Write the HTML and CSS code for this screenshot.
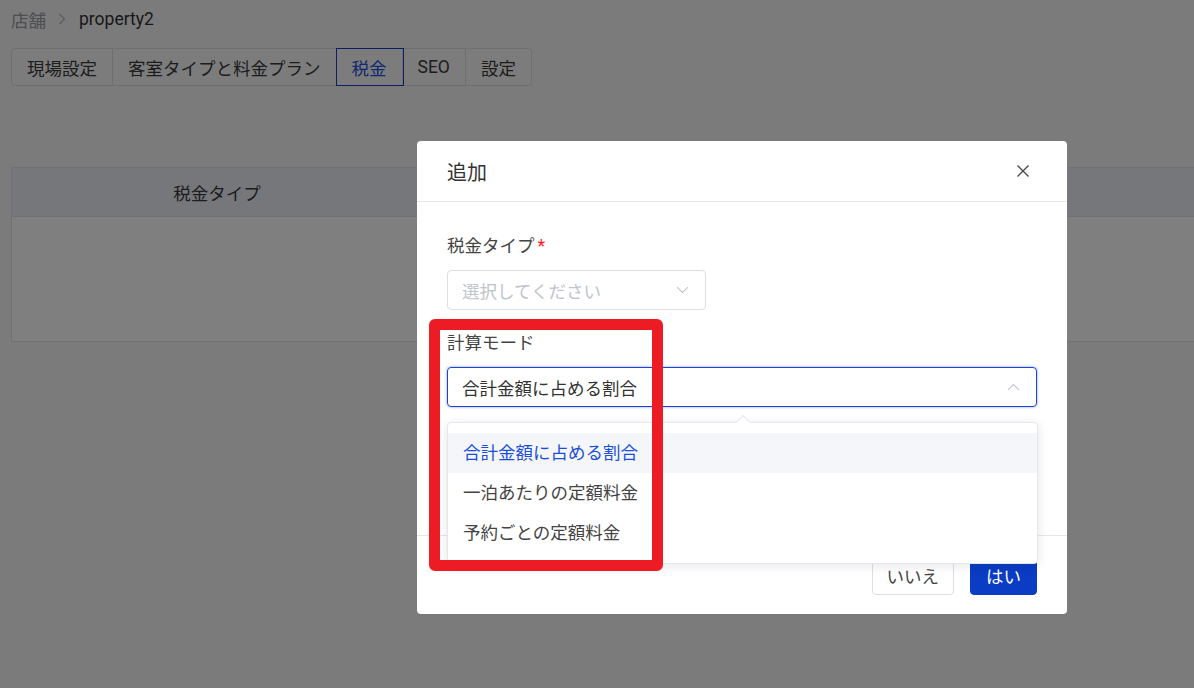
FILE: index.html
```html
<!DOCTYPE html>
<html lang="ja">
<head>
    <meta charset="UTF-8">
    <meta name="viewport" content="width=device-width, initial-scale=1.0">
    <title>税金</title>
    <link rel="stylesheet" href="styles.css">
</head>
<body>
    <div class="page">
        <div class="breadcrumb">
            <span class="crumb-parent">店舗</span>
            <svg class="crumb-sep" width="8" height="12" viewBox="0 0 8 12"><path d="M1.5 1 L6.5 6 L1.5 11" fill="none" stroke="#b4b7bd" stroke-width="1.2"/></svg>
            <span class="crumb-current">property2</span>
        </div>

        <div class="tabs">
            <div class="tab">現場設定</div>
            <div class="tab">客室タイプと料金プラン</div>
            <div class="tab active">税金</div>
            <div class="tab">SEO</div>
            <div class="tab">設定</div>
        </div>

        <table class="tax-table">
            <thead>
                <tr>
                    <th class="col-type">税金タイプ</th>
                    <th class="col-mode"></th>
                    <th class="col-amount"></th>
                </tr>
            </thead>
            <tbody>
                <tr>
                    <td colspan="3" class="empty"></td>
                </tr>
            </tbody>
        </table>
    </div>

    <div class="mask"></div>

    <div class="dialog">
        <div class="dialog-header">
            <span class="dialog-title">追加</span>
            <svg class="dialog-close" width="14" height="14" viewBox="0 0 14 14"><path d="M1.5 1.5 L12.5 12.5 M12.5 1.5 L1.5 12.5" fill="none" stroke="#444" stroke-width="1.3"/></svg>
        </div>

        <div class="dialog-body">
            <div class="form-item">
                <label class="form-label">税金タイプ<span class="required">*</span></label>
                <div class="select select-small">
                    <span class="placeholder">選択してください</span>
                    <svg width="13" height="8" viewBox="0 0 13 8"><path d="M1 1.2 L6.5 6.5 L12 1.2" fill="none" stroke="#c0c4cc" stroke-width="1.1"/></svg>
                </div>
            </div>
            <div class="form-item">
                <label class="form-label">計算モード</label>
                <div class="select select-wide focused">
                    <span class="value">合計金額に占める割合</span>
                    <svg width="13" height="8" viewBox="0 0 13 8"><path d="M1 6.8 L6.5 1.5 L12 6.8" fill="none" stroke="#c0c4cc" stroke-width="1.1"/></svg>
                </div>
            </div>
        </div>

        <div class="dialog-footer">
            <button class="btn">いいえ</button>
            <button class="btn btn-primary">はい</button>
        </div>

        <ul class="dropdown">
            <li class="selected">合計金額に占める割合</li>
            <li>一泊あたりの定額料金</li>
            <li>予約ごとの定額料金</li>
        </ul>
    </div>

    <div class="highlight"></div>
</body>
</html>
```

FILE: styles.css
```css
body {
    margin: 0;
    height: 688px;
    overflow: hidden;
    font-family: Roboto, "Noto Sans CJK JP", sans-serif;
    font-size: 17.5px;
    color: #333;
    background-color: #f6f6f8;
}

.page {
    padding: 7px 0 0 11px;
}

.breadcrumb {
    display: flex;
    align-items: center;
    height: 24px;
}

.crumb-parent {
    color: #9a9da4;
}

.crumb-sep {
    margin: 0 13px 0 12px;
}

.crumb-current {
    color: #333;
}

.tabs {
    display: inline-flex;
    margin-top: 17px;
    height: 38px;
    box-sizing: border-box;
    border: 1px solid #dcdfe6;
    border-radius: 4px;
    background-color: #f9f9fa;
}

.tab {
    display: flex;
    align-items: center;
    padding: 0 15px;
    border-right: 1px solid #dcdfe6;
    color: #3a3a3a;
}

.tab:last-child {
    border-right: none;
}

.tab.active {
    position: relative;
    color: #2450e0;
    box-shadow: 0 0 0 1px #1b3fc8;
}

.tax-table {
    margin-top: 81px;
    width: calc(100% + 20px);
    border-collapse: collapse;
    background-color: #fff;
}

.tax-table th {
    height: 48px;
    padding: 0;
    font-weight: normal;
    color: #3b3b3b;
    background-color: #eceef5;
    border: 1px solid #e0e2e8;
    border-right: none;
}

.col-type {
    width: 410px;
}

.col-mode {
    width: 400px;
}

.tax-table td {
    height: 124px;
    padding: 0;
    border: 1px solid #e0e2e8;
}

.mask {
    position: fixed;
    inset: 0;
    background-color: rgba(0, 0, 0, 0.5);
}

.dialog {
    position: absolute;
    left: 417px;
    top: 141px;
    width: 650px;
    height: 473px;
    background-color: #fff;
    border-radius: 4px;
}

.dialog-header {
    display: flex;
    align-items: center;
    justify-content: space-between;
    height: 60px;
    padding: 0 30px;
    border-bottom: 1px solid #e4e7ed;
}

.dialog-title {
    font-size: 20px;
    color: #333;
}

.dialog-close {
    margin-right: 7px;
}

.dialog-body {
    height: 333px;
    box-sizing: border-box;
    padding: 32px 30px 0;
}

.form-item {
    margin-bottom: 21px;
}

.form-label {
    display: block;
    line-height: 24px;
    margin-bottom: 12px;
    color: #444;
}

.required {
    color: #f5222d;
    margin-left: 3px;
}

.select {
    display: flex;
    align-items: center;
    justify-content: space-between;
    height: 40px;
    box-sizing: border-box;
    padding: 0 16px 0 14px;
    border: 1px solid #dcdfe6;
    border-radius: 4px;
}

.select-small {
    width: 259px;
}

.select-wide {
    width: 590px;
}

.select.focused {
    border-color: #1d43d3;
    box-shadow: 0 0 2px 1px rgba(29, 67, 211, 0.25);
}

.placeholder {
    color: #c0c4cc;
}

.value {
    color: #333;
}

.dialog-footer {
    display: flex;
    justify-content: flex-end;
    gap: 16px;
    padding: 19px 30px 20px;
    border-top: 1px solid #e4e7ed;
}

.btn {
    height: 40px;
    padding: 0 14px;
    font-family: inherit;
    font-size: 17.5px;
    color: #444;
    background-color: #fff;
    border: 1px solid #dcdfe6;
    border-radius: 4px;
}

.btn-primary {
    min-width: 67px;
    color: #fff;
    background-color: #0a3cc4;
    border-color: #0a3cc4;
}

.dropdown {
    position: absolute;
    left: 30px;
    top: 281px;
    width: 591px;
    box-sizing: border-box;
    margin: 0;
    padding: 10px 0;
    list-style: none;
    background-color: #fff;
    border: 1px solid #e4e7ed;
    border-radius: 4px;
    box-shadow: 0 2px 12px rgba(0, 0, 0, 0.1);
}

.dropdown::before {
    content: "";
    position: absolute;
    top: -6px;
    left: 290px;
    width: 9px;
    height: 9px;
    background-color: #fff;
    border-top: 1px solid #e4e7ed;
    border-left: 1px solid #e4e7ed;
    transform: rotate(45deg);
}

.dropdown li {
    height: 40px;
    line-height: 40px;
    padding-left: 15px;
    color: #444;
}

.dropdown li.selected {
    color: #1c4fd8;
    background-color: #f5f6fa;
}

.highlight {
    position: absolute;
    left: 429px;
    top: 319px;
    width: 234px;
    height: 252px;
    box-sizing: border-box;
    border: 11px solid #ed1c24;
    border-radius: 6px;
}
```
